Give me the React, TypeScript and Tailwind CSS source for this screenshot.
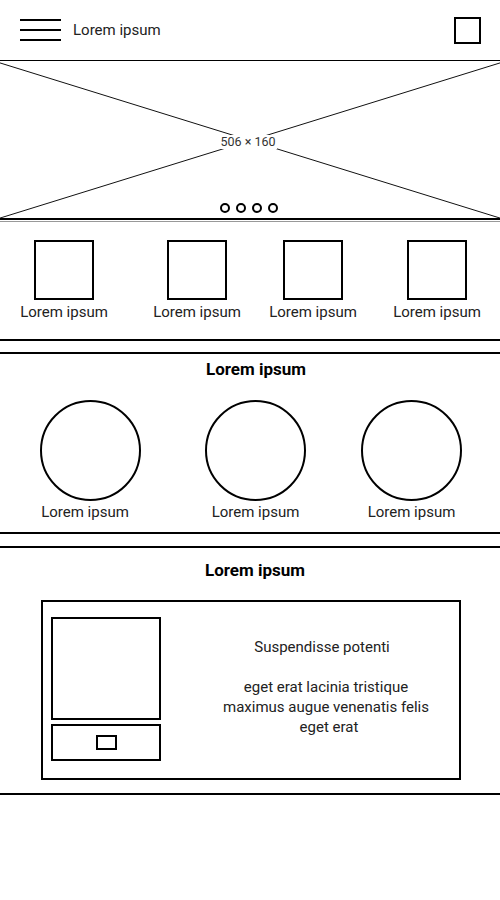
import React from "react";

const font = { fontFamily: "Roboto, 'Liberation Sans', sans-serif" };

function Label({ children }: { children: React.ReactNode }) {
  return <div className="text-[15px] leading-[18px] text-[#222] whitespace-nowrap">{children}</div>;
}

export default function App() {
  return (
    <div className="w-[500px] h-[900px] bg-white overflow-hidden" style={font}>
      {/* Header */}
      <div className="h-[60px] flex items-center pl-5 pr-[19px]">
        <div className="flex flex-col gap-[8px] w-[41px]">
          <div className="h-[2px] bg-black" />
          <div className="h-[2px] bg-black" />
          <div className="h-[2px] bg-black" />
        </div>
        <div className="ml-3 text-[15px] text-[#222]">Lorem ipsum</div>
        <div className="ml-auto w-[27px] h-[27px] border-2 border-black" />
      </div>

      {/* Image placeholder */}
      <div className="relative h-[160px] border-t border-black border-b-2 overflow-hidden">
        <svg className="absolute left-[-3px] top-0" width="506" height="160" viewBox="0 0 506 160">
          <line x1="0" y1="1" x2="506" y2="158" stroke="#111" strokeWidth="1" />
          <line x1="506" y1="1" x2="0" y2="158" stroke="#111" strokeWidth="1" />
        </svg>
        <div className="absolute inset-0 flex items-center justify-center pt-[4px] pr-[4px]">
          <span className="bg-white px-[1px] text-[12.5px] leading-[14px] text-[#333]">506 × 160</span>
        </div>
        <div className="absolute left-0 right-0 bottom-[5px] flex justify-center">
          <div className="flex gap-[6px] ml-[-2px]">
            <div className="w-[10px] h-[10px] rounded-full border-2 border-black bg-white" />
            <div className="w-[10px] h-[10px] rounded-full border-2 border-black bg-white" />
            <div className="w-[10px] h-[10px] rounded-full border-2 border-black bg-white" />
            <div className="w-[10px] h-[10px] rounded-full border-2 border-black bg-white" />
          </div>
        </div>
      </div>
      <div className="h-px mt-px bg-[#999]" />

      {/* Section 2: squares */}
      <div className="h-[117px] pt-[18px] flex">
        <div className="ml-5 w-[88px] flex flex-col items-center gap-[3px]">
          <div className="w-[60px] h-[60px] border-2 border-black" />
          <Label>Lorem ipsum</Label>
        </div>
        <div className="ml-[45px] w-[88px] flex flex-col items-center gap-[3px]">
          <div className="w-[60px] h-[60px] border-2 border-black" />
          <Label>Lorem ipsum</Label>
        </div>
        <div className="ml-[28px] w-[88px] flex flex-col items-center gap-[3px]">
          <div className="w-[60px] h-[60px] border-2 border-black" />
          <Label>Lorem ipsum</Label>
        </div>
        <div className="ml-[36px] w-[88px] flex flex-col items-center gap-[3px]">
          <div className="w-[60px] h-[60px] border-2 border-black" />
          <Label>Lorem ipsum</Label>
        </div>
      </div>
      <div className="h-[2px] bg-black" />
      <div className="h-[11px]" />
      <div className="h-[2px] bg-black" />

      {/* Section 3: circles */}
      <div className="h-[178px] pt-[5px]">
        <div className="text-center text-[17px] leading-[20px] font-bold text-black pl-[12px]">Lorem ipsum</div>
        <div className="flex mt-[21px]">
          <div className="ml-[40px] w-[101px] flex flex-col items-center gap-[2px]">
            <div className="w-[101px] h-[101px] rounded-full border-2 border-black" />
            <div className="mr-[11px]">
              <Label>Lorem ipsum</Label>
            </div>
          </div>
          <div className="ml-[64px] w-[101px] flex flex-col items-center gap-[2px]">
            <div className="w-[101px] h-[101px] rounded-full border-2 border-black" />
            <Label>Lorem ipsum</Label>
          </div>
          <div className="ml-[55px] w-[101px] flex flex-col items-center gap-[2px]">
            <div className="w-[101px] h-[101px] rounded-full border-2 border-black" />
            <Label>Lorem ipsum</Label>
          </div>
        </div>
      </div>
      <div className="h-[2px] bg-black" />
      <div className="h-[12px]" />
      <div className="h-[2px] bg-black" />

      {/* Section 4: card */}
      <div className="h-[245px] pt-[12px]">
        <div className="text-center text-[17px] leading-[20px] font-bold text-black pl-[10px]">Lorem ipsum</div>
        <div className="mt-[20px] ml-[41px] w-[420px] h-[180px] border-2 border-black flex items-center pl-[8px]">
          <div className="flex flex-col gap-[4px] mt-[-3px]">
            <div className="w-[110px] h-[103px] border-2 border-black" />
            <div className="w-[110px] h-[37px] border-2 border-black flex items-center justify-center">
              <div className="w-[21px] h-[15px] border-2 border-black" />
            </div>
          </div>
          <div className="flex-1 text-center text-[15px] leading-[20px] text-[#222] pl-[32px] mt-[-7px]">
            <div className="pr-[8px]">Suspendisse potenti</div>
            <div className="h-[20px]" />
            <div>eget erat lacinia tristique</div>
            <div>maximus augue venenatis felis</div>
            <div className="pl-[6px]">eget erat</div>
          </div>
        </div>
      </div>
      <div className="h-[2px] bg-black" />
    </div>
  );
}
